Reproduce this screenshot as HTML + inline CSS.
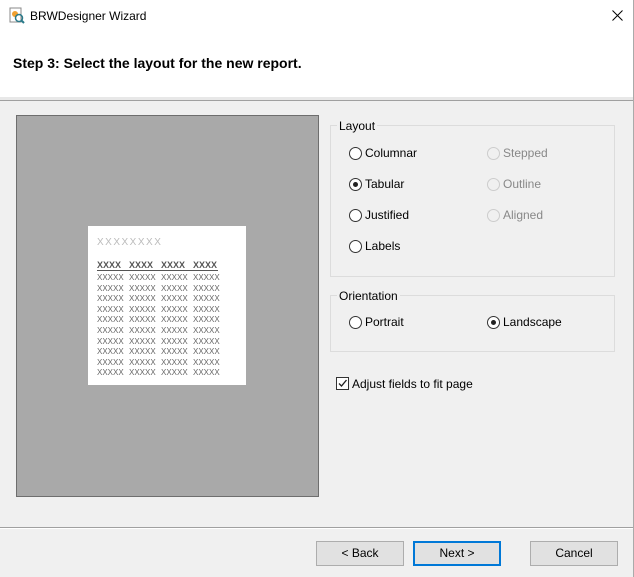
<!DOCTYPE html><html><head><style>
body{margin:0;width:634px;height:577px;position:relative;background:#f0f0f0;font-family:"Liberation Sans",sans-serif;font-size:12px;color:#000;overflow:hidden}
.a{position:absolute}
.r{position:absolute;width:11px;height:11px;border:1px solid #333;border-radius:50%;background:#fff}
.r.d{border-color:#ccc;background:#f0f0f0}
.r.c::after{content:"";position:absolute;left:3px;top:3px;width:5px;height:5px;border-radius:50%;background:#222}
.t{position:absolute;font-size:12px}
.g{color:#888}
.btn{position:absolute;top:541px;width:86px;height:23px;border:1px solid #adadad;background:#e1e1e1;text-align:center;line-height:23px;font-size:12px}
.x{color:#666;font-size:8px;font-family:"Liberation Sans",sans-serif}
.x span{display:inline-block;width:32px}
</style></head><body>
<div class="a" style="left:0;top:0;width:633px;height:97px;background:#fff"></div>
<div class="a" style="left:633px;top:0;width:1px;height:577px;background:#aaa"></div>
<div class="a" style="left:0;top:97px;width:633px;height:3px;background:#e8e8e8;border-bottom:1px solid #a0a0a0"></div>
<svg class="a" style="left:8px;top:7px" width="18" height="18"><rect x="2" y="1" width="11" height="14" fill="#fff" stroke="#888"/><circle cx="7" cy="7" r="3" fill="#f0a030"/><circle cx="11" cy="11" r="3.5" fill="none" stroke="#2a7a8a" stroke-width="1.5"/><line x1="13" y1="13" x2="16" y2="16" stroke="#2a7a8a" stroke-width="2"/></svg>
<div class="t" style="left:30px;top:9px">BRWDesigner Wizard</div>
<svg class="a" style="left:612px;top:10px" width="11" height="11"><path d="M0.5 0.5L10.5 10.5M10.5 0.5L0.5 10.5" stroke="#000" stroke-width="1"/></svg>
<div class="t" style="left:13px;top:55px;font-size:14px;font-weight:bold">Step 3: Select the layout for the new report.</div>
<div class="a" style="left:16px;top:115px;width:301px;height:380px;background:#a9a9a9;border:1px solid #6e6e6e"></div>
<div class="a" style="left:88px;top:226px;width:158px;height:159px;background:#fff"></div>
<div class="a x" style="left:97px;top:237px;color:#bbb;font-size:10px;letter-spacing:1.5px">XXXXXXXX</div>
<div class="a x" style="left:97px;top:260px;font-weight:bold;font-size:9px;color:#555"><span>XXXX</span><span>XXXX</span><span>XXXX</span><span>XXXX</span></div>
<div class="a" style="left:97px;top:270px;width:121px;height:1px;background:#555"></div>
<div class="a x" id="rows" style="left:97px;top:273px;line-height:10.6px;font-size:8px"></div>
<script>var h="";for(var i=0;i<10;i++)h+="<span>XXXXX</span><span>XXXXX</span><span>XXXXX</span><span>XXXXX</span><br>";document.getElementById("rows").innerHTML=h;</script>
<div class="a" style="left:330px;top:125px;width:283px;height:150px;border:1px solid #dcdcdc"></div>
<div class="t" style="left:337px;top:119px;background:#f0f0f0;padding:0 2px">Layout</div>
<div class="r" style="left:349px;top:147px"></div><div class="t" style="left:365px;top:146px">Columnar</div>
<div class="r c" style="left:349px;top:178px"></div><div class="t" style="left:365px;top:177px">Tabular</div>
<div class="r" style="left:349px;top:209px"></div><div class="t" style="left:365px;top:208px">Justified</div>
<div class="r" style="left:349px;top:240px"></div><div class="t" style="left:365px;top:239px">Labels</div>
<div class="r d" style="left:487px;top:147px"></div><div class="t g" style="left:503px;top:146px">Stepped</div>
<div class="r d" style="left:487px;top:178px"></div><div class="t g" style="left:503px;top:177px">Outline</div>
<div class="r d" style="left:487px;top:209px"></div><div class="t g" style="left:503px;top:208px">Aligned</div>
<div class="a" style="left:330px;top:295px;width:283px;height:55px;border:1px solid #dcdcdc"></div>
<div class="t" style="left:337px;top:289px;background:#f0f0f0;padding:0 2px">Orientation</div>
<div class="r" style="left:349px;top:316px"></div><div class="t" style="left:365px;top:315px">Portrait</div>
<div class="r c" style="left:487px;top:316px"></div><div class="t" style="left:503px;top:315px">Landscape</div>
<div class="a" style="left:336px;top:377px;width:11px;height:11px;border:1px solid #333;background:#fff"></div>
<svg class="a" style="left:337px;top:378px" width="11" height="11"><path d="M2 5.5L4.5 8L9.5 2" fill="none" stroke="#222" stroke-width="1.3"/></svg>
<div class="t" style="left:352px;top:377px">Adjust fields to fit page</div>
<div class="a" style="left:0;top:527px;width:633px;height:1px;background:#a0a0a0"></div>
<div class="a" style="left:0;top:528px;width:633px;height:1px;background:#fff"></div>
<div class="btn" style="left:316px">&lt; Back</div>
<div class="btn" style="left:413px;border:2px solid #0078d7;width:84px;height:21px;line-height:21px">Next &gt;</div>
<div class="btn" style="left:530px">Cancel</div>
</body></html>
